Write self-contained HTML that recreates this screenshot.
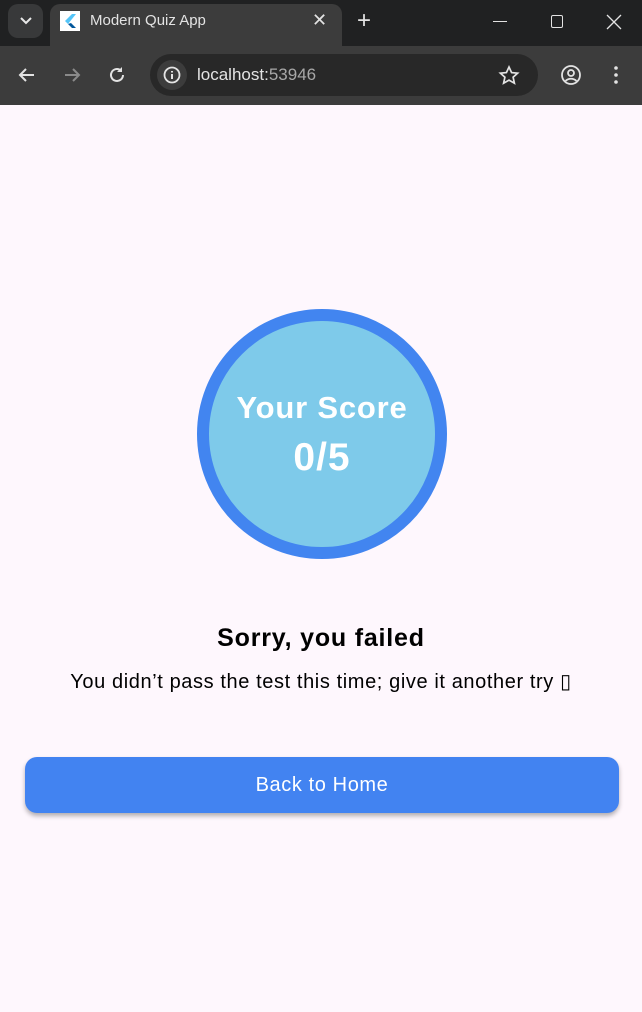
<!DOCTYPE html>
<html><head><meta charset="utf-8"><style>
*{margin:0;padding:0;box-sizing:border-box}
body{width:642px;height:1012px;overflow:hidden;background:#fef7fd;font-family:"Liberation Sans",sans-serif;position:relative}
.abs{position:absolute}
</style></head><body>
<div class="abs" style="left:0;top:0;width:642px;height:46px;background:#202122"></div>
<div class="abs" style="left:8px;top:4px;width:35px;height:34px;background:#38393a;border-radius:10px"></div>
<svg class="abs" style="left:18px;top:14px" width="16" height="14"><path d="M3 4l5 5 5-5" stroke="#e8e8e8" stroke-width="2" fill="none"/></svg>
<div class="abs" style="left:50px;top:4px;width:292px;height:46px;background:#3c3c3c;border-radius:10px 10px 0 0"></div>
<div class="abs" style="left:60px;top:11px;width:20px;height:20px;background:#fff"></div>
<svg class="abs" style="left:60px;top:11px" width="20" height="20"><path d="M12 3L5 10l3 3 8-10z" fill="#54c5f8"/><path d="M8 13l4 4h4l-5-5z" fill="#01579b"/></svg>
<div class="abs" style="left:90px;top:12px;color:#e3e3e3;font-size:15px">Modern Quiz App</div>
<div class="abs" style="left:312px;top:10px;color:#e3e3e3;font-size:18px">✕</div>
<div class="abs" style="left:357px;top:7px;color:#e3e3e3;font-size:24px;font-weight:300">+</div>
<div class="abs" style="left:493px;top:21px;width:14px;height:1px;background:#e3e3e3"></div>
<div class="abs" style="left:551px;top:15px;width:12px;height:13px;border:1.3px solid #e3e3e3;border-radius:2px"></div>
<svg class="abs" style="left:606px;top:14px" width="16" height="16"><path d="M1 1l14 14M15 1L1 15" stroke="#e3e3e3" stroke-width="1.3"/></svg>
<div class="abs" style="left:0;top:46px;width:642px;height:59px;background:#3c3c3c"></div>
<svg class="abs" style="left:17px;top:65px" width="20" height="20"><path d="M17 10H4M9 4l-6 6 6 6" stroke="#e3e3e3" stroke-width="2" fill="none"/></svg>
<svg class="abs" style="left:62px;top:65px" width="20" height="20"><path d="M3 10h13M11 4l6 6-6 6" stroke="#8a8a8a" stroke-width="2" fill="none"/></svg>
<svg class="abs" style="left:107px;top:65px" width="20" height="20"><path d="M16 10a6 6 0 1 1-2-4.5" stroke="#e3e3e3" stroke-width="2" fill="none"/><path d="M15 2v5h-5" fill="#e3e3e3"/></svg>
<div class="abs" style="left:150px;top:54px;width:388px;height:42px;background:#282828;border-radius:21px"></div>
<div class="abs" style="left:157px;top:60px;width:30px;height:30px;background:#3c3c3c;border-radius:15px"></div>
<svg class="abs" style="left:162px;top:65px" width="20" height="20"><circle cx="10" cy="10" r="7.5" stroke="#e3e3e3" stroke-width="1.8" fill="none"/><path d="M10 9v5M10 6v1.5" stroke="#e3e3e3" stroke-width="2"/></svg>
<div class="abs" style="left:197px;top:65px;color:#e3e3e3;font-size:17px">localhost:<span style="color:#a8a8a8">53946</span></div>
<svg class="abs" style="left:498px;top:65px" width="22" height="20"><path d="M11 2l2.6 5.6 6 .6-4.5 4 1.3 6-5.4-3.1-5.4 3.1 1.3-6-4.5-4 6-.6z" stroke="#e3e3e3" stroke-width="1.7" fill="none"/></svg>
<svg class="abs" style="left:560px;top:64px" width="22" height="22"><circle cx="11" cy="11" r="9" stroke="#e3e3e3" stroke-width="1.8" fill="none"/><circle cx="11" cy="9" r="3" stroke="#e3e3e3" stroke-width="1.8" fill="none"/><path d="M5.5 17c3-3 8-3 11 0" stroke="#e3e3e3" stroke-width="1.8" fill="none"/></svg>
<svg class="abs" style="left:612px;top:64px" width="8" height="22"><circle cx="4" cy="4" r="1.8" fill="#e3e3e3"/><circle cx="4" cy="11" r="1.8" fill="#e3e3e3"/><circle cx="4" cy="18" r="1.8" fill="#e3e3e3"/></svg>

<div class="abs" style="left:197px;top:309px;width:250px;height:250px;border-radius:50%;background:#7ecaea;border:12px solid #4285f0"></div>
<div class="abs" style="left:197px;top:390px;width:250px;text-align:center;color:#fff;font-weight:bold;font-size:31px;letter-spacing:0.8px">Your Score</div>
<div class="abs" style="left:197px;top:436px;width:250px;text-align:center;color:#fff;font-weight:bold;font-size:39px;letter-spacing:1px">0/5</div>
<div class="abs" style="left:0;top:624px;width:642px;text-align:center;color:#000;font-weight:bold;font-size:25px;letter-spacing:0.8px">Sorry, you failed</div>
<div class="abs" style="left:0;top:669px;width:642px;text-align:center;color:#000;font-size:20px;letter-spacing:0.6px">You didn’t pass the test this time; give it another try ▯</div>
<div class="abs" style="left:25px;top:757px;width:594px;height:56px;border-radius:12px;background:#4283f1;box-shadow:0 3px 5px rgba(0,0,0,.3);color:#fff;font-size:20px;letter-spacing:0.6px;text-align:center;line-height:56px">Back to Home</div>
</body></html>
